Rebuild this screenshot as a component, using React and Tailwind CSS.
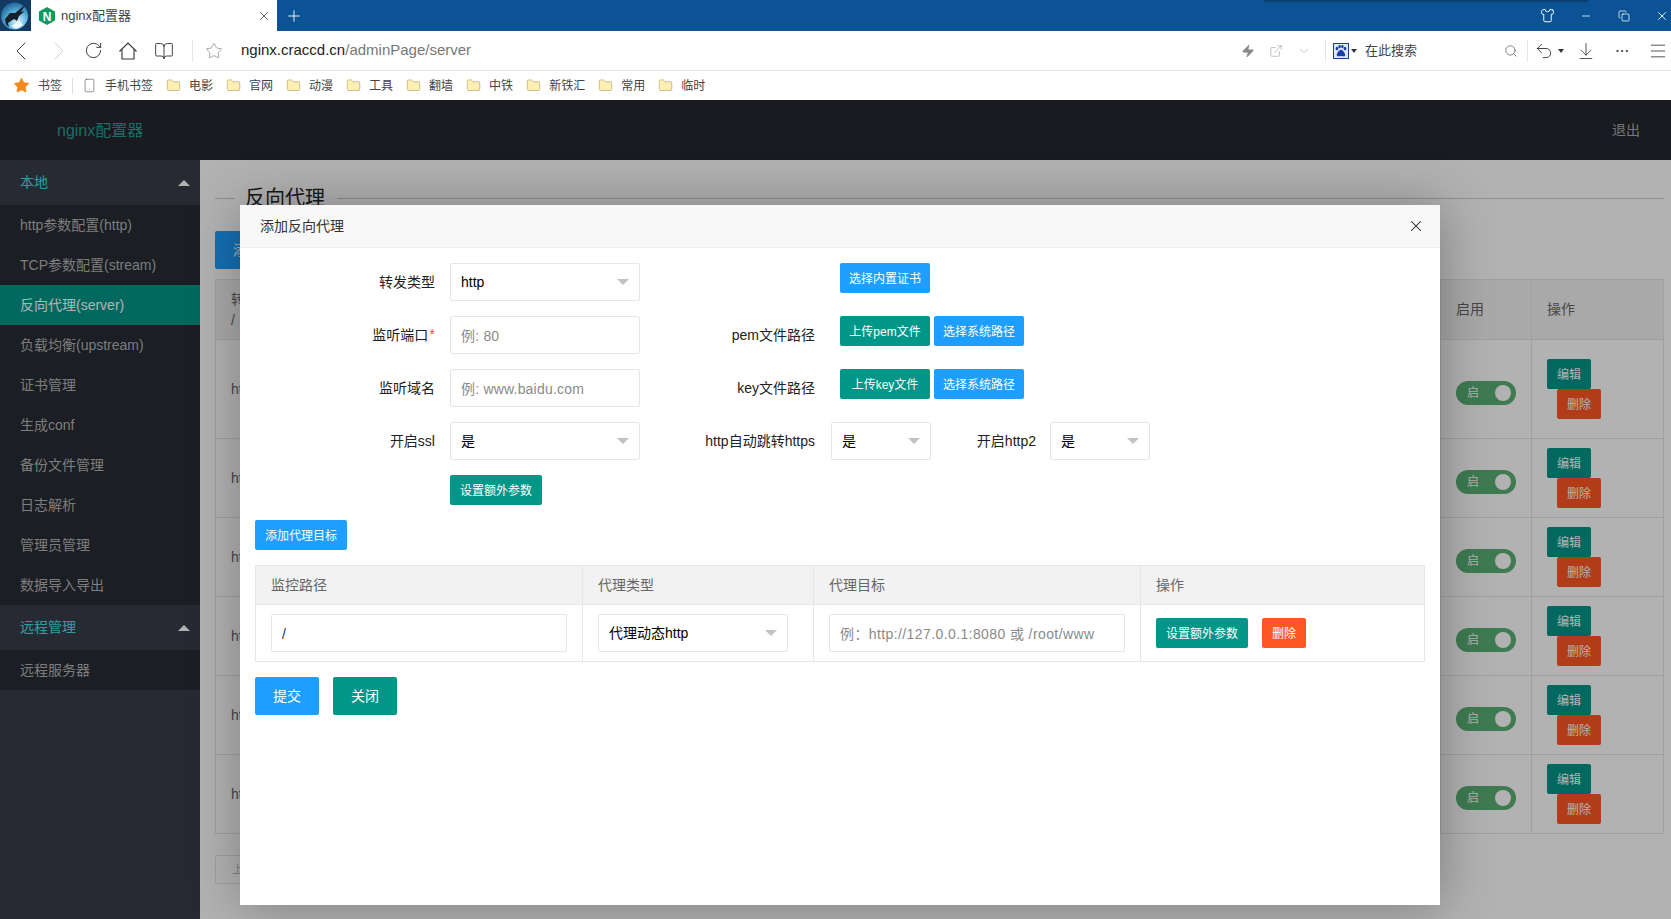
import React from "react";
import {
  ChevronLeft, ChevronRight, RotateCw, BookOpen, Star, Zap, ExternalLink, ChevronDown,
  Search, Undo2, ArrowDownToLine, MoreHorizontal, Menu, Shirt, Minus, Copy, X, Plus, Smartphone, Folder,
} from "lucide-react";

const Caret = ({ className = "" }) => (
  <span className={`inline-block w-0 h-0 border-x-[6px] border-x-transparent border-t-[6px] border-t-[#c2c2c2] ${className}`} />
);
const SmallCaret = ({ className = "" }) => (
  <span className={`inline-block w-0 h-0 border-x-[3px] border-x-transparent border-t-[4px] border-t-[#333] ${className}`} />
);
const UpCaret = () => (
  <span className="ml-auto mr-[10px] w-0 h-0 border-x-[6px] border-x-transparent border-b-[6px] border-b-white" />
);

const Logo = () => (
  <svg width="31" height="31" viewBox="0 0 31 31" className="shrink-0">
    <defs>
      <radialGradient id="g" cx="0.6" cy="0.7" r="0.75">
        <stop offset="0" stopColor="#dff4fb" />
        <stop offset="0.5" stopColor="#58b4dd" />
        <stop offset="1" stopColor="#1a5a8c" />
      </radialGradient>
    </defs>
    <rect width="31" height="31" fill="#123a63" />
    <circle cx="14.5" cy="16" r="13.5" fill="url(#g)" />
    <path d="M5 19 L10 13 L15 13 L25 5 L21 12 L25 11 L19 16 L17 21 L14 19 L8 23 L9 27 L6 25 Z" fill="#17212c" />
    <path d="M11 26 L20 21 L23 25 L16 29 Z" fill="#eef9fd" />
  </svg>
);

const NginxIcon = () => (
  <svg width="16" height="18" viewBox="0 0 16 18" className="shrink-0">
    <polygon points="8,0 16,4.5 16,13.5 8,18 0,13.5 0,4.5" fill="#0f9a5c" />
    <text x="8" y="13.5" textAnchor="middle" fontSize="12" fontWeight="700" fill="#fff" fontFamily="Liberation Sans, sans-serif">N</text>
  </svg>
);

const HomeOutline = ({ className = "" }) => (
  <svg width="20" height="20" viewBox="0 0 20 20" fill="none" stroke="currentColor" strokeWidth="1.1" className={className}>
    <path d="M1.5 10.5 L10 2 L18.5 10.5" />
    <path d="M4 8.5 V18 H16 V8.5" />
  </svg>
);

const Paw = () => (
  <svg width="16" height="16" viewBox="0 0 16 16" className="shrink-0">
    <rect x="0.5" y="0.5" width="15" height="15" fill="#dfe7f5" stroke="#1c3f8f" />
    <ellipse cx="4" cy="5.6" rx="1.4" ry="1.8" fill="#1a3fa8" />
    <ellipse cx="12" cy="5.6" rx="1.4" ry="1.8" fill="#1a3fa8" />
    <ellipse cx="6.6" cy="3.6" rx="1.3" ry="1.7" fill="#1a3fa8" />
    <ellipse cx="9.4" cy="3.6" rx="1.3" ry="1.7" fill="#1a3fa8" />
    <path d="M8 6.8 C6.4 6.8 3.4 10.4 3.8 12.4 C4.4 14 7 13 8 13 C9 13 11.6 14 12.2 12.4 C12.6 10.4 9.6 6.8 8 6.8 Z" fill="#1a3fa8" />
  </svg>
);

const bookmarks = ["电影", "官网", "动漫", "工具", "翻墙", "中铁", "新铁汇", "常用", "临时"];

const localNav = [
  "http参数配置(http)", "TCP参数配置(stream)", "反向代理(server)", "负载均衡(upstream)", "证书管理",
  "生成conf", "备份文件管理", "日志解析", "管理员管理", "数据导入导出",
];

const Select = ({ value, width = "w-[190px]" }) => (
  <div className={`${width} h-[38px] shrink-0 border border-[#e6e6e6] rounded-[2px] bg-white flex items-center pl-[10px] pr-[10px] text-[14px] text-black`}>
    <span className="pt-px">{value}</span>
    <Caret className="ml-auto" />
  </div>
);

const TextInput = ({ placeholder, value, width = "w-[190px]", tracking = "tracking-[0.2px]" }) => (
  <input
    readOnly
    placeholder={placeholder}
    defaultValue={value}
    className={`${width} ${tracking} h-[38px] shrink-0 border border-[#e6e6e6] rounded-[2px] bg-white pl-[10px] pt-[2px] text-[14px] text-[#333] placeholder:text-[#8a8a8a] outline-none`}
  />
);

const Btn = ({ color, children, className = "" }) => (
  <button className={`h-[30px] rounded-[2px] pt-px text-white text-[12px] shrink-0 ${color} ${className}`}>{children}</button>
);

const Label = ({ width, children }) => (
  <div className={`${width} h-[38px] shrink-0 flex items-center justify-end text-[14px] text-[#222]`}>{children}</div>
);

const BLUE = "bg-[#1e9fff]";
const TEAL = "bg-[#009688]";

const Row = ({ tall }) => (
  <tr className={tall ? "h-[99px]" : "h-[79px]"}>
    <td className="border border-[#e6e6e6] px-[15px] text-[14px] text-[#666]">http</td>
    <td className="border border-[#e6e6e6] px-[15px]">
      <div className="mt-2 w-[60px] h-[24px] rounded-full bg-[#5ab075] flex items-center pl-[11px] pr-[5px] text-[12px] text-white">
        <span>启</span>
        <span className="ml-auto w-[16px] h-[16px] rounded-full bg-white" />
      </div>
    </td>
    <td className="border border-[#e6e6e6] px-[15px]">
      <div className="flex flex-col items-start">
        <button className={`w-[44px] h-[30px] pt-px rounded-[2px] ${TEAL} text-white text-[12px]`}>编辑</button>
        <button className="w-[44px] h-[30px] pt-px ml-[10px] rounded-[2px] bg-[#ff5722] text-white text-[12px]">删除</button>
      </div>
    </td>
  </tr>
);

export default function App() {
  return (
    <div className="w-[1671px] h-[919px] overflow-hidden flex flex-col bg-white font-['Liberation_Sans','Noto_Sans_CJK_SC',sans-serif]">
      {/* title bar */}
      <div className="relative h-[31px] shrink-0 bg-[#0b5394] flex items-center text-white">
        <span className="absolute top-0 left-[1264px] w-[324px] h-[2px] bg-[#08406f]" />
        <Logo />
        <div className="w-[246px] h-full bg-white flex items-center pl-[8px] text-[#444]">
          <NginxIcon />
          <span className="ml-[6px] text-[13px]">nginx配置器</span>
          <X size={14} strokeWidth={1.2} className="ml-auto mr-[6px] text-[#222]" />
        </div>
        <Plus size={18} strokeWidth={1.2} className="ml-[8px]" />
        <div className="ml-auto flex items-center pr-[2px]">
          <Shirt size={15} strokeWidth={1.5} />
          <Minus size={12} strokeWidth={1.5} className="ml-[25px]" />
          <Copy size={12} strokeWidth={1.5} className="ml-[26px]" />
          <X size={14} strokeWidth={1.5} className="ml-[25px]" />
        </div>
      </div>

      {/* toolbar */}
      <div className="h-[40px] shrink-0 bg-white border-b border-[#e6e6e6] flex items-center text-[#333] pl-[5px] pr-[3px]">
        <ChevronLeft size={32} strokeWidth={0.7} />
        <ChevronRight size={32} strokeWidth={0.7} className="ml-[6px] text-[#ccc]" />
        <RotateCw size={19} strokeWidth={1.2} className="ml-[9px]" />
        <HomeOutline className="ml-[15px]" />
        <BookOpen size={20} strokeWidth={1.1} className="ml-[16px]" />
        <span className="ml-[18px] w-px h-[22px] bg-[#e6e6e6]" />
        <Star size={18} strokeWidth={1} className="ml-[12px] text-[#888]" />
        <div className="ml-[18px] text-[15px] text-[#222]">
          nginx.craccd.cn<span className="text-[#777]">/adminPage/server</span>
        </div>
        <div className="ml-auto flex items-center">
          <Zap size={14} strokeWidth={1} fill="#888" className="text-[#888]" />
          <ExternalLink size={14} strokeWidth={1} className="ml-[14px] text-[#999]" />
          <ChevronDown size={14} strokeWidth={1} className="ml-[14px] text-[#999]" />
          <span className="ml-[14px] w-px h-[22px] bg-[#e6e6e6]" />
          <span className="ml-[7px] flex"><Paw /></span>
          <SmallCaret className="ml-[2px]" />
          <span className="ml-[8px] text-[13px] text-[#444]">在此搜索</span>
          <Search size={14} strokeWidth={1.1} className="ml-[87px] text-[#444]" />
          <span className="ml-[9px] w-px h-[22px] bg-[#e6e6e6]" />
          <Undo2 size={20} strokeWidth={1.1} className="ml-[6px]" />
          <SmallCaret className="ml-[4px]" />
          <ArrowDownToLine size={20} strokeWidth={1} className="ml-[12px]" />
          <MoreHorizontal size={16} strokeWidth={1.4} className="ml-[18px]" />
          <Menu size={20} strokeWidth={1} className="ml-[18px]" />
        </div>
      </div>

      {/* bookmarks */}
      <div className="h-[29px] shrink-0 bg-white flex items-center text-[12px] text-[#444] pl-[13px]">
        <Star size={17} strokeWidth={1} fill="#f08a1d" className="text-[#f08a1d]" />
        <span className="ml-[8px]">书签</span>
        <span className="ml-[10px] w-px h-[16px] bg-[#ddd]" />
        <Smartphone size={15} strokeWidth={1} className="ml-[9px] text-[#555]" />
        <span className="ml-[8px]">手机书签</span>
        {bookmarks.map((name) => (
          <div key={name} className="ml-[13px] flex items-center">
            <Folder size={15} strokeWidth={1} fill="#fdf0b5" className="text-[#b59c58]" />
            <span className="ml-[8px]">{name}</span>
          </div>
        ))}
      </div>

      {/* page */}
      <div className="relative flex-1 flex flex-col min-h-0">
        <div className="h-[60px] shrink-0 bg-[#26282f] flex items-center pl-[57px] pr-[31px]">
          <span className="pt-[2px] text-[16px] text-[#269c91]">nginx配置器</span>
          <span className="ml-auto text-[14px] text-[#aaaaaa]">退出</span>
        </div>
        <div className="flex-1 flex min-h-0">
          <aside className="w-[200px] shrink-0 bg-[#393d49] text-[14px]">
            <div className="h-[45px] flex items-center pl-[20px] text-[#45e0e3]">本地<UpCaret /></div>
            {localNav.map((t) => (
              <div
                key={t}
                className={`h-[40px] flex items-center pl-[20px] ${t.startsWith("反向") ? "bg-[#009688] text-white" : "bg-[#282b33] text-[#b3b3b3]"}`}
              >
                {t}
              </div>
            ))}
            <div className="h-[45px] flex items-center pl-[20px] text-[#45e0e3]">远程管理<UpCaret /></div>
            <div className="h-[40px] flex items-center pl-[20px] bg-[#282b33] text-[#b3b3b3]">远程服务器</div>
          </aside>

          <main className="flex-1 min-w-0 bg-white pl-[15px] pr-[7px] pt-[28px]">
            <div className="h-[20px] flex items-center">
              <span className="w-[20px] h-px bg-[#ccc]" />
              <span className="ml-[10px] text-[20px] text-[#222] leading-none">反向代理</span>
              <span className="ml-[12px] flex-1 h-px bg-[#ccc]" />
            </div>
            <button className={`mt-[23px] h-[38px] w-[130px] rounded-[2px] ${BLUE} text-white text-[14px] block text-left pl-[18px]`}>添加反向代理</button>
            <table className="mt-[10px] w-full table-fixed border-collapse">
              <colgroup>
                <col />
                <col className="w-[91px]" />
                <col className="w-[132px]" />
              </colgroup>
              <thead>
                <tr className="h-[60px] bg-[#f2f2f2] text-[14px] text-[#666] text-left">
                  <th className="border border-[#e6e6e6] px-[15px] font-normal">转<br />/</th>
                  <th className="border border-[#e6e6e6] px-[15px] font-normal">启用</th>
                  <th className="border border-[#e6e6e6] px-[15px] font-normal">操作</th>
                </tr>
              </thead>
              <tbody>
                <Row tall />
                <Row />
                <Row />
                <Row />
                <Row />
                <Row />
              </tbody>
            </table>
            <button className="mt-[21px] h-[29px] w-[60px] border border-[#e6e6e6] rounded-[2px] text-[12px] text-[#bbb] text-left pl-[16px]">上一页</button>
          </main>
        </div>

        {/* mask */}
        <div className="absolute inset-0 bg-black/30" />

        {/* dialog */}
        <div className="absolute left-[240px] top-[105px] w-[1200px] h-[700px] bg-white shadow-[1px_1px_50px_rgba(0,0,0,0.3)]">
          <div className="h-[43px] bg-[#f8f8f8] border-b border-[#eee] flex items-center pl-[20px] pr-[15px] text-[14px] text-[#333]">
            <span>添加反向代理</span>
            <X size={18} strokeWidth={1.4} className="ml-auto text-[#222]" />
          </div>

          <div className="pt-[15px]">
            <div className="flex items-start h-[38px] mb-[15px]">
              <Label width="w-[195px]">转发类型</Label>
              <div className="ml-[15px]"><Select value="http" /></div>
              <div className="ml-[200px]"><Btn color={BLUE} className="w-[90px]">选择内置证书</Btn></div>
            </div>
            <div className="flex items-start h-[38px] mb-[15px]">
              <Label width="w-[195px]">监听端口<span className="text-[#e8553a] text-[15px] self-start ml-px mt-[10px] leading-none">*</span></Label>
              <div className="ml-[15px]"><TextInput placeholder="例: 80" /></div>
              <Label width="w-[175px]">pem文件路径</Label>
              <Btn color={TEAL} className="ml-[25px] w-[90px]">上传pem文件</Btn>
              <Btn color={BLUE} className="ml-[4px] w-[90px]">选择系统路径</Btn>
            </div>
            <div className="flex items-start h-[38px] mb-[15px]">
              <Label width="w-[195px]">监听域名</Label>
              <div className="ml-[15px]"><TextInput placeholder="例: www.baidu.com" /></div>
              <Label width="w-[175px]">key文件路径</Label>
              <Btn color={TEAL} className="ml-[25px] w-[90px]">上传key文件</Btn>
              <Btn color={BLUE} className="ml-[4px] w-[90px]">选择系统路径</Btn>
            </div>
            <div className="flex items-start h-[38px] mb-[15px]">
              <Label width="w-[195px]">开启ssl</Label>
              <div className="ml-[15px]"><Select value="是" /></div>
              <Label width="w-[175px]">http自动跳转https</Label>
              <div className="ml-[16px]"><Select value="是" width="w-[100px]" /></div>
              <Label width="w-[105px]">开启http2</Label>
              <div className="ml-[14px]"><Select value="是" width="w-[100px]" /></div>
            </div>
            <div className="pl-[210px] h-[30px] mb-[15px]">
              <Btn color={TEAL} className="w-[92px] block">设置额外参数</Btn>
            </div>
            <div className="pl-[15px] h-[30px] mb-[15px]">
              <Btn color={BLUE} className="w-[92px] block">添加代理目标</Btn>
            </div>

            <div className="px-[15px]">
              <table className="w-[1169px] table-fixed border-collapse text-[14px]">
                <colgroup>
                  <col className="w-[327px]" />
                  <col className="w-[231px]" />
                  <col className="w-[327px]" />
                  <col className="w-[284px]" />
                </colgroup>
                <thead>
                  <tr className="h-[39px] bg-[#f2f2f2] text-[#666] text-left">
                    <th className="border border-[#e6e6e6] pl-[15px] font-normal">监控路径</th>
                    <th className="border border-[#e6e6e6] pl-[15px] font-normal">代理类型</th>
                    <th className="border border-[#e6e6e6] pl-[15px] font-normal">代理目标</th>
                    <th className="border border-[#e6e6e6] pl-[15px] font-normal">操作</th>
                  </tr>
                </thead>
                <tbody>
                  <tr className="h-[57px]">
                    <td className="border border-[#e6e6e6] pl-[15px]"><TextInput value="/" width="w-[296px]" /></td>
                    <td className="border border-[#e6e6e6] pl-[15px]"><Select value="代理动态http" /></td>
                    <td className="border border-[#e6e6e6] pl-[15px]"><TextInput placeholder="例：http://127.0.0.1:8080 或 /root/www" width="w-[296px]" tracking="tracking-[0.4px]" /></td>
                    <td className="border border-[#e6e6e6] pl-[15px]">
                      <div className="flex items-center">
                        <Btn color={TEAL} className="w-[92px]">设置额外参数</Btn>
                        <Btn color="bg-[#ff5722]" className="ml-[14px] w-[44px]">删除</Btn>
                      </div>
                    </td>
                  </tr>
                </tbody>
              </table>
            </div>

            <div className="mt-[15px] pl-[15px] flex">
              <button className={`w-[64px] h-[38px] rounded-[2px] ${BLUE} text-white text-[14px]`}>提交</button>
              <button className={`ml-[14px] w-[64px] h-[38px] rounded-[2px] ${TEAL} text-white text-[14px]`}>关闭</button>
            </div>
          </div>
        </div>
      </div>
    </div>
  );
}
